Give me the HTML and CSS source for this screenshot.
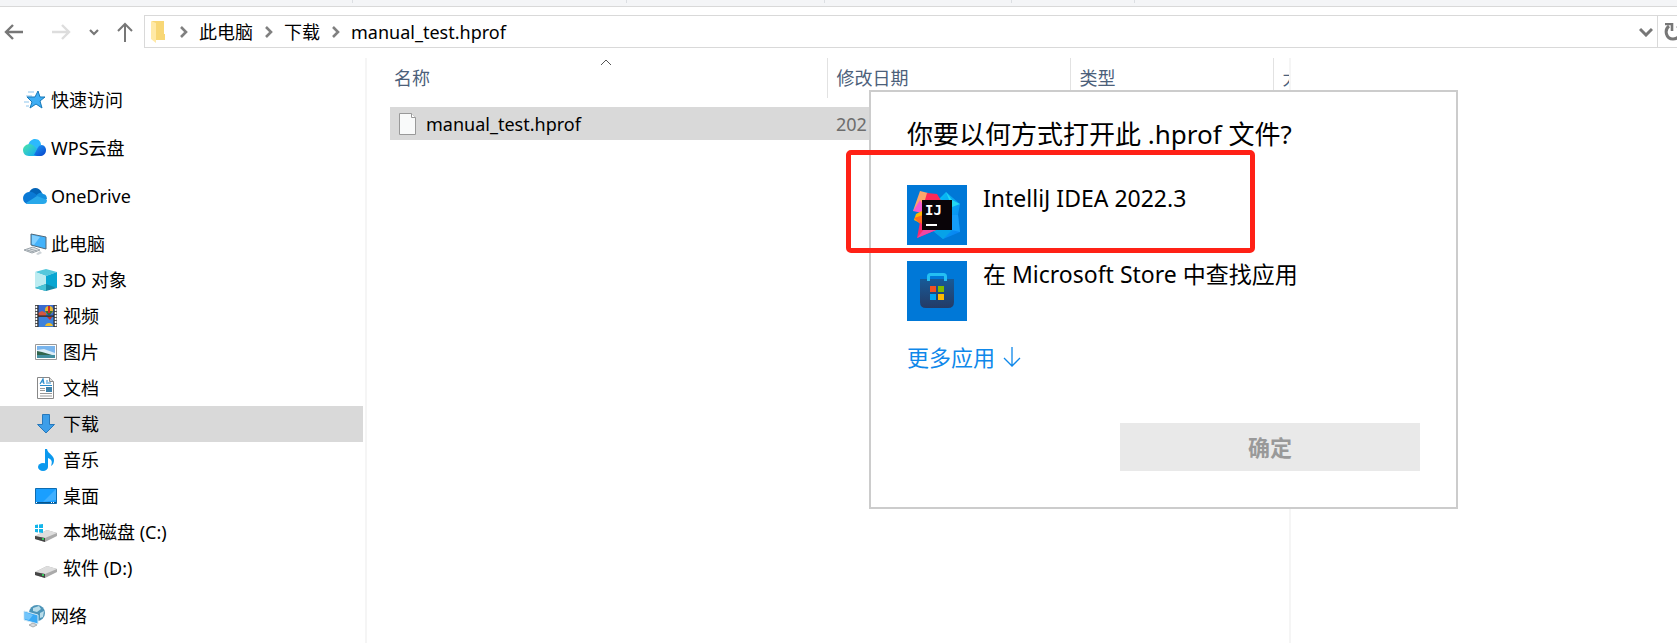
FILE: index.html
```html
<!DOCTYPE html>
<html lang="zh-CN">
<head>
  <meta charset="UTF-8">
  <title>manual_test.hprof</title>
  <link rel="stylesheet" href="styles.css">
</head>
<body>
  <div class="ribbon"><span></span><span></span><span></span><span></span><span></span></div>

  <header class="toolbar">
    <div class="nav-buttons">
      <button type="button" aria-label="后退"><svg width="20" height="20" viewBox="0 0 20 20"><path d="M19 10H2M9 3L2 10L9 17" fill="none" stroke="#777" stroke-width="2.4"/></svg></button>
      <button type="button" aria-label="前进"><svg width="20" height="20" viewBox="0 0 20 20"><path d="M1 10H18M11 3L18 10L11 17" fill="none" stroke="#ddd" stroke-width="2.4"/></svg></button>
      <button type="button" aria-label="最近浏览的位置"><svg width="10" height="20" viewBox="0 0 10 20"><path d="M1 8L5 12L9 8" fill="none" stroke="#777" stroke-width="2.2"/></svg></button>
      <button type="button" aria-label="上移"><svg width="16" height="20" viewBox="0 0 16 20"><path d="M8 20V2M1 9L8 2L15 9" fill="none" stroke="#777" stroke-width="2"/></svg></button>
    </div>
    <nav class="address">
      <svg class="folder" width="15" height="23" viewBox="0 0 15 23"><path d="M1 1H13V14H14V20H4Z" fill="#f8d775"/><path d="M0 1L5 3V23L0 19Z" fill="#ffe9a6"/></svg>
      <svg class="sep" width="8" height="12" viewBox="0 0 8 12"><path d="M1 1L6 6L1 11" fill="none" stroke="#808080" stroke-width="2.6"/></svg>
      <a href="#">此电脑</a>
      <svg class="sep" width="8" height="12" viewBox="0 0 8 12"><path d="M1 1L6 6L1 11" fill="none" stroke="#808080" stroke-width="2.6"/></svg>
      <a href="#">下载</a>
      <svg class="sep" width="8" height="12" viewBox="0 0 8 12"><path d="M1 1L6 6L1 11" fill="none" stroke="#808080" stroke-width="2.6"/></svg>
      <a href="#">manual_test.hprof</a>
      <button type="button" class="history" aria-label="以前的位置"><svg width="14" height="10" viewBox="0 0 14 10"><path d="M1 2L7 8L13 2" fill="none" stroke="#777" stroke-width="3"/></svg></button>
      <button type="button" class="refresh" aria-label="刷新"><svg width="20" height="18" viewBox="0 0 20 18"><path d="M1 1H8V8" fill="none" stroke="#777" stroke-width="2.6"/><path d="M5 3C0 7 2 16 9 16C17 16 18 6 13 3" fill="none" stroke="#777" stroke-width="3"/></svg></button>
    </nav>
  </header>

  <div class="window">
    <aside class="sidebar">
      <ul class="group">
        <li><a href="#"><svg width="24" height="24" viewBox="0 0 24 24"><path d="M5 4H11M3 8H9M1 14H6M3 18H6" stroke="#8cc5ed" stroke-width="1"/><path d="M15 3L17 9L22 9L17 13L19 20L13 16L7 20L9 14L4 9L12 9Z" fill="#3eaef5" stroke="#1779b9" stroke-width="1"/></svg>快速访问</a></li>
      </ul>
      <ul class="group">
        <li><a href="#"><svg width="24" height="24" viewBox="0 0 24 24">
          <defs>
            <linearGradient id="w1" x1="0" y1="0" x2="1" y2="1"><stop offset="0" stop-color="#4be6a8"/><stop offset="1" stop-color="#12a8f5"/></linearGradient>
            <linearGradient id="w2" x1="0" y1="0" x2="1" y2="1"><stop offset="0" stop-color="#20a4ff"/><stop offset="1" stop-color="#0742c8"/></linearGradient>
          </defs>
          <path d="M5 10C6 5 9 3 12 3C16 3 18 6 18 9L12 16Z" fill="#2cb9fd"/><path d="M9 20L16 10C20 7 23 11 23 14C23 18 20 20 17 20Z" fill="url(#w2)"/><path d="M14 20H6C2 20 0 17 0 14C0 11 3 8 7 8C11 9 12 11 14 13L11 19Z" fill="url(#w1)"/></svg>WPS云盘</a></li>
      </ul>
      <ul class="group">
        <li><a href="#"><svg width="24" height="24" viewBox="0 0 24 24"><path d="M6 9C8 3 16 2 19 9L14 14Z" fill="#0364b8"/><path d="M6 8C10 7 12 10 15 12L4 20C-2 18-1 9 6 8Z" fill="#0a79d5"/><path d="M13 12C16 7 20 9 20 10C23 10 24 13 24 15L21 17Z" fill="#1490df"/><path d="M3 19L14 12L24 16C24 19 22 20 20 20H5Z" fill="#28a8ea"/></svg>OneDrive</a></li>
      </ul>
      <ul class="group">
        <li><a href="#"><svg width="24" height="24" viewBox="0 0 24 24"><path d="M8 2L23 5V17L8 13Z" fill="#43b2fa" stroke="#52697a" stroke-width="1"/><path d="M9 3L17 5L11 13L9 12Z" fill="#83d0ff"/><path d="M1 18L10 15L17 18L9 21Z" fill="#dfe3e6" stroke="#9ca5ab" stroke-width="1"/><path d="M4 18L11 20M7 17L14 19" stroke="#9ca5ab"/><path d="M13 22L17 19L19 21L15 23Z" fill="#cdd3d7"/></svg>此电脑</a></li>
        <li class="child"><a href="#"><svg width="24" height="24" viewBox="0 0 24 24"><path d="M1 4L12 1L23 4L12 8Z" fill="#54c8dc"/><path d="M1 4L12 8V18L1 20Z" fill="#bcecf1"/><path d="M23 4L12 8V18L23 20Z" fill="#08a6d2"/><path d="M1 20L12 16L23 20L12 23Z" fill="#1289a7"/><path d="M1 20L12 16V23Z" fill="#48c3d6"/></svg>3D 对象</a></li>
        <li class="child"><a href="#"><svg width="24" height="24" viewBox="0 0 24 24"><path d="M1 1H23V23H1Z" fill="#555"/><path d="M2.500 2V23M21.500 2V23" stroke="#fff" stroke-width="2" stroke-dasharray="2 1"/><path d="M4 1H20V12H4Z" fill="#3a6bd0"/><path d="M4 13H20V23H4Z" fill="#3e82db"/><path d="M4 9L8 7L12 9V12H4Z" fill="#d45740"/><circle cx="15" cy="6" r="4" fill="#e8b62f"/><path d="M11 7H19L16 11H14Z" fill="#376c37"/><path d="M14 2H16V9H14Z" fill="#cb2929"/><path d="M13 13H18L16 16Z" fill="#c92d25"/><path d="M11 22C12 18 18 18 19 22Z" fill="#f0bd2a"/><path d="M4 12H20M4 1V23M20 1V23" stroke="#222" stroke-width="1"/></svg>视频</a></li>
        <li class="child"><a href="#"><svg width="24" height="24" viewBox="0 0 24 24"><path d="M1.500 4.500H22.500V19.500H1.500Z" fill="#fff" stroke="#999"/><path d="M3 6H21V18H3Z" fill="#79b5ed"/><path d="M3 10L10 9L21 13V15H3Z" fill="#dcecf7"/><path d="M3 11L8 12L18 15L3 16Z" fill="#32664d"/><path d="M3 15H21V18H3Z" fill="#438fa0"/></svg>图片</a></li>
        <li class="child"><a href="#"><svg width="24" height="24" viewBox="0 0 24 24"><path d="M3.500 1.500H15.500L19.500 5.500V22.500H3.500Z" fill="#fff" stroke="#888"/><path d="M15.500 1.500V5.500H19.500" fill="#ddd" stroke="#888"/><path d="M6 8L9 3L10 8M7 6H10M12 5H14M12 7H17M6 9.500H18" fill="none" stroke="#2b8ccc" stroke-width="1.200"/><path d="M6 12.500H11M6 14.500H11M6 17.500H18M6 20H18" stroke="#999"/><path d="M12 11H18V16H12Z" fill="#3d82ab"/></svg>文档</a></li>
        <li class="child current"><a href="#"><svg width="24" height="24" viewBox="0 0 24 24"><path d="M8.500 2.500H15.500V12.500H20.500L12 21L3.500 12.500H8.500Z" fill="#3d9ee9" stroke="#2778bb"/></svg>下载</a></li>
        <li class="child"><a href="#"><svg width="24" height="24" viewBox="0 0 24 24"><ellipse cx="9" cy="19" rx="5" ry="4" fill="#0b99ee"/><path d="M11 1H13C14 6 20 7 20 12C20 15 19 17 17 18C19 13 17 11 14 10V19H11Z" fill="#0b99ee"/></svg>音乐</a></li>
        <li class="child"><a href="#"><svg width="24" height="24" viewBox="0 0 24 24"><path d="M1.500 4.500H22.500V19.500H1.500Z" fill="#1a9fff" stroke="#0e6cb0"/><path d="M22 5V16L9 18Z" fill="#41b0ff"/><path d="M2 18.500H22" stroke="#07558d"/><path d="M2 18.500H4M17 18.500H21" stroke="#fff" stroke-dasharray="1 1"/></svg>桌面</a></li>
        <li class="child"><a href="#"><svg width="24" height="24" viewBox="0 0 24 24"><path d="M1 16L13 10L23 13V16L11 22L1 19Z" fill="#aaa"/><path d="M1 16L13 10L23 13L11 18Z" fill="#dedede"/><path d="M1 16L11 18V22L1 19Z" fill="#454545"/><path d="M8 19H10" stroke="#36c75c" stroke-width="2"/><path d="M1 5L4 4.500V8H1ZM5 4.500L9 4V8H5ZM1 9H4V12.500L1 12ZM5 9H9V13L5 12.500Z" fill="#13b5ea"/></svg>本地磁盘 (C:)</a></li>
        <li class="child"><a href="#"><svg width="24" height="24" viewBox="0 0 24 24"><path d="M1 16L13 10L23 13V16L11 22L1 19Z" fill="#aaa"/><path d="M1 16L13 10L23 13L11 18Z" fill="#dedede"/><path d="M1 16L11 18V22L1 19Z" fill="#454545"/><path d="M8 19H10" stroke="#36c75c" stroke-width="2"/></svg>软件 (D:)</a></li>
      </ul>
      <ul class="group">
        <li><a href="#"><svg width="24" height="24" viewBox="0 0 24 24"><circle cx="14" cy="9" r="8" fill="#4c94b8"/><path d="M10 4L16 2L18 5L14 8L10 7ZM17 9L21 7L20 13L17 14Z" fill="#b9ddea"/><path d="M1 7L15 11V20L1 16Z" fill="#3aa9f4" stroke="#d5eaf5"/><path d="M2 8L10 11L6 16L2 15Z" fill="#72c5fb"/><path d="M6 21L10 19L14 21L10 23Z" fill="#d7dadd" stroke="#a9afb3"/></svg>网络</a></li>
      </ul>
    </aside>

    <main class="files">
      <table>
        <colgroup><col class="col-name"><col class="col-date"><col class="col-type"><col></colgroup>
        <thead>
          <tr>
            <th class="sorted">名称<svg width="12" height="7" viewBox="0 0 12 7"><path d="M1 6L6 1L11 6" fill="none" stroke="#555"/></svg></th>
            <th>修改日期</th>
            <th>类型</th>
            <th>大小</th>
          </tr>
        </thead>
        <tbody>
          <tr>
            <td><div class="file"><svg width="17" height="22" viewBox="0 0 17 22"><path d="M.5 .5H12.500L16.500 4.500V21.500H.5Z" fill="#f9fafa" stroke="#999"/><path d="M12.500 .5V4.500H16.500" fill="#fff" stroke="#999"/></svg>manual_test.hprof</div></td>
            <td class="date">202</td>
            <td></td>
            <td></td>
          </tr>
        </tbody>
      </table>
    </main>
  </div>

  <section class="dialog" role="dialog" aria-labelledby="dialog-title">
    <h1 id="dialog-title">你要以何方式打开此 .hprof 文件?</h1>
    <button type="button" class="app">
      <svg width="60" height="60" viewBox="0 0 60 60">
        <defs><linearGradient id="blue" x1="0" y1="0" x2="1" y2="1"><stop offset="0" stop-color="#08c9f3"/><stop offset="1" stop-color="#087cf2"/></linearGradient></defs>
        <path d="M0 0H60V60H0Z" fill="#0078d7"/>
        <path d="M32 14L39 7L53 19L51 30L53 47L36 54L25 45Z" fill="url(#blue)"/>
        <path d="M39 7L45 15L53 19L45 22Z" fill="#23d7f2"/><path d="M45 30L51 30L53 47L44 45Z" fill="#159df9"/><path d="M25 45H45L36 54Z" fill="#06a3e8"/>
        <path d="M13 6L21 8L17 23L6 26Z" fill="#fba66b"/><path d="M20 8L30 9L35 17L16 22Z" fill="#fe2857"/><path d="M13 15L17 23L15 28L6 26Z" fill="#f65ad1"/>
        <path d="M15 26L9 29L7 35L15 39Z" fill="#ffb800"/><path d="M7 33L16 30V41L12 38Z" fill="#ff6c21"/><path d="M13 37L18 43L29 45L10 53Z" fill="#fb2a68"/><path d="M18 43L29 45L10 53Z" fill="#ed47a3"/>
        <path d="M15 15H45V45H15Z" fill="#090408"/>
        <text class="ij" x="18" y="30">IJ</text>
        <path d="M19 39H30V41H19Z" fill="#fff"/>
      </svg>
      <span>IntelliJ IDEA 2022.3</span>
    </button>
    <button type="button" class="app">
      <svg width="60" height="60" viewBox="0 0 60 60">
        <defs><linearGradient id="bag" x1="0" y1="0" x2="0" y2="1"><stop offset="0" stop-color="#175a98"/><stop offset="1" stop-color="#243b66"/></linearGradient></defs>
        <path d="M0 0H60V60H0Z" fill="#0078d7"/>
        <path d="M13 18H47V41Q47 47 41 47H19Q13 47 13 41Z" fill="url(#bag)"/>
        <path d="M21.500 20V15.500Q21.500 13.500 23.500 13.500H36.500Q38.500 13.500 38.500 15.500V20" fill="none" stroke="#24bff3" stroke-width="3"/>
        <path d="M23 25H29V31H23Z" fill="#f25022"/><path d="M31 25H37V31H31Z" fill="#7fba00"/><path d="M23 33H29V39H23Z" fill="#00a4ef"/><path d="M31 33H37V39H31Z" fill="#ffb900"/>
      </svg>
      <span>在 Microsoft Store 中查找应用</span>
    </button>
    <a href="#" class="more">更多应用<svg width="18" height="20" viewBox="0 0 18 20"><path d="M9 0V19M1 11L9 19L17 11" fill="none" stroke="#0f88ea" stroke-width="1.300"/></svg></a>
    <button type="button" class="confirm" disabled>确定</button>
  </section>
  <div class="highlight"></div>
</body>
</html>
```

FILE: styles.css
```css
* { box-sizing: border-box; }
body { margin: 0; height: 100vh; display: flex; flex-direction: column; position: relative; overflow: hidden; background: #fff; color: #000; font-family: "Noto Sans", "Noto Sans CJK SC", sans-serif; font-size: 18px; line-height: 24px; }
button { padding: 0; border: none; background: none; font: inherit; color: inherit; }
a { color: inherit; text-decoration: none; }
svg { display: block; flex: none; }

.ribbon { flex: none; display: grid; grid-template-columns: 353px 274px 198px 187px 123px; height: 7px; background: #f4f5f7; border-bottom: 1px solid #d9d9d9; }
.ribbon span { height: 3px; border-right: 1px solid #dcdfe3; }

.toolbar { flex: none; display: flex; padding-top: 8px; }
.nav-buttons { display: flex; align-items: center; width: 144px; padding-left: 4px; }
.nav-buttons button { margin-right: 27px; }
.nav-buttons button:nth-child(2) { margin-right: 18px; }
.nav-buttons button:nth-child(3) { margin-right: 18px; }
.nav-buttons button:nth-child(4) { margin-right: 0; }
.address { flex: 1; display: flex; align-items: center; height: 33px; padding-left: 6px; border: 1px solid #d9d9d9; border-right: none; }
.address .sep { margin: 0 11px 0 12px; }
.address .folder + .sep { margin-left: 14px; }
.history { margin-left: auto; margin-right: 4px; }
.refresh { width: 20px; height: 31px; padding-left: 6px; border-left: 1px solid #d9d9d9; overflow: hidden; }

.window { flex: 1; display: flex; min-height: 0; padding-top: 10px; }
.sidebar { width: 367px; padding: 24px 2px 0 0; border-right: 2px solid #f5f5f5; }
.group { margin: 0 0 12px; padding: 0; list-style: none; }
.group a { display: flex; align-items: center; gap: 4px; height: 36px; padding-left: 23px; }
.group .child a { padding-left: 34px; gap: 5px; }
.group .current { background: #d9d9d9; }

.files { width: 924px; padding-left: 23px; border-right: 2px solid #f5f5f5; }
table { width: 100%; table-layout: fixed; border-collapse: collapse; }
.col-name { width: 437px; }
.col-date { width: 243px; }
.col-type { width: 203px; }
th { height: 40px; padding: 0 0 0 9px; border-right: 1px solid #e2e2e2; color: #4c607a; font-weight: normal; text-align: left; white-space: nowrap; overflow: hidden; }
th:last-child { border-right: none; }
th.sorted { position: relative; padding-left: 4px; }
.sorted svg { position: absolute; top: 1px; left: calc(50% - 8px); }
tbody::before { content: ""; display: table-row; height: 9px; }
td { height: 33px; padding: 0 0 0 9px; background: #d9d9d9; }
.file { display: flex; align-items: center; gap: 10px; }
.date { color: #6d6d6d; }

.dialog { position: absolute; top: 90px; left: 869px; width: 589px; padding: 24px 36px 36px; display: flex; flex-direction: column; align-items: flex-start; background: #fff; border: 2px solid #ccc; font-size: 22px; }
.dialog h1 { margin: 0 0 33px; font-size: 26px; line-height: 36px; font-weight: normal; }
.app { display: flex; gap: 16px; width: 100%; margin-bottom: 16px; text-align: left; font-size: 23px; line-height: 26px; }
.ij { font-family: "DejaVu Sans Mono", monospace; font-size: 14px; font-weight: bold; fill: #fff; }
.more { display: flex; align-items: center; gap: 8px; margin-top: 5px; color: #0f88ea; line-height: 30px; }
.confirm { width: 300px; height: 48px; margin-top: 51px; align-self: flex-end; background: #e9e9e9; color: #999; font-weight: bold; }

.highlight { position: absolute; top: 150px; left: 846px; width: 409px; height: 103px; border: 5px solid #ff2116; border-radius: 5px; }
```
